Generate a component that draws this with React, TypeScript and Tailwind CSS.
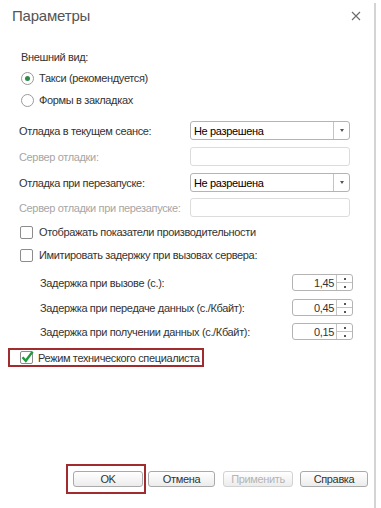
import React from "react";

const FONT = { fontFamily: '"Liberation Sans", Arial, sans-serif' };

function Radio({ checked }: { checked?: boolean }) {
  return (
    <span className="flex h-[13px] w-[13px] shrink-0 items-center justify-center rounded-full border border-[#9a9a9a] bg-white">
      {checked && <span className="h-[5px] w-[5px] rounded-full bg-[#2f8a4a]" />}
    </span>
  );
}

function Checkbox({ checked }: { checked?: boolean }) {
  return (
    <span className="relative block h-[13px] w-[13px] shrink-0 rounded-[2px] border border-[#8c8c8c] bg-white">
      {checked && (
        <svg
          className="absolute -left-[1px] -top-[3px]"
          width="15"
          height="15"
          viewBox="0 0 15 15"
        >
          <path d="M2.5 8.2 L5.8 11.8 L12.6 2.6" fill="none" stroke="#1f9a3c" strokeWidth="2.4" />
        </svg>
      )}
    </span>
  );
}

function Select({ value }: { value: string }) {
  return (
    <div className="flex h-[19px] w-[160px] shrink-0 items-stretch rounded-[3px] border border-[#b4b4b4] bg-white">
      <div className="flex flex-1 items-center pl-[3px] text-black">{value}</div>
      <div className="flex w-[16px] items-center justify-center border-l border-[#c4c4c4]">
        <span className="block h-0 w-0 border-x-[2.5px] border-t-[3px] border-x-transparent border-t-[#555]" />
      </div>
    </div>
  );
}

function EmptyInput() {
  return <div className="h-[19px] w-[160px] shrink-0 rounded-[3px] border border-[#dcdcdc] bg-white" />;
}

function Spin({ value }: { value: string }) {
  return (
    <div className="flex h-[17px] w-[61px] shrink-0 items-stretch rounded-[3px] border border-[#b4b4b4] bg-white">
      <div className="flex flex-1 items-center justify-end pr-[2px] text-[#333]">{value}</div>
      <div className="flex w-[16px] flex-col border-l border-[#c4c4c4]">
        <div className="flex flex-1 items-center justify-center border-b border-[#c4c4c4]">
          <span className="block h-[2px] w-[2px] bg-[#555]" />
        </div>
        <div className="flex flex-1 items-center justify-center">
          <span className="block h-[2px] w-[2px] bg-[#555]" />
        </div>
      </div>
    </div>
  );
}

function Button({ label, disabled, width }: { label: string; disabled?: boolean; width: string }) {
  return (
    <div
      className={`flex h-[16px] items-center justify-center rounded-[3px] border bg-gradient-to-b from-white to-[#ececec] ${width} ${
        disabled ? "border-[#d2d2d2] text-[#b4b4b4]" : "border-[#a9a9a9] text-[#333]"
      }`}
    >
      {label}
    </div>
  );
}

function FieldRow({ label, muted, mt, children }: { label: string; muted?: boolean; mt: string; children: React.ReactNode }) {
  return (
    <div className={`flex items-center ${mt}`}>
      <div className={`w-[190px] shrink-0 pl-[19px] ${muted ? "text-[#a6a6a6]" : "text-[#333]"}`}>{label}</div>
      {children}
    </div>
  );
}

function DelayRow({ label, value, mt }: { label: string; value: string; mt: string }) {
  return (
    <div className={`flex items-center ${mt}`}>
      <div className="w-[292px] shrink-0 pl-[40px] text-[#333]">{label}</div>
      <Spin value={value} />
    </div>
  );
}

export default function App() {
  return (
    <div
      className="flex h-[508px] w-[381px] whitespace-nowrap bg-white text-[11px] leading-[14px] tracking-[-0.35px]"
      style={FONT}
    >
      <main className="flex w-[374px] flex-col">
        <header className="flex h-[27px] items-center justify-between pl-[12px] pr-[13px] pt-[4px]">
          <h1 className="text-[15px] leading-[20px] tracking-[-0.2px] text-[#555]">Параметры</h1>
          <svg width="10" height="10" viewBox="0 0 10 10">
            <path d="M1 1 L9 9 M9 1 L1 9" stroke="#6b6b6b" strokeWidth="1.1" />
          </svg>
        </header>

        <div className="mt-[20px] flex h-[20px] items-center pl-[21px] text-[#333]">Внешний вид:</div>
        <label className="flex h-[22px] items-center gap-[5px] pl-[21px] text-[#333]">
          <Radio checked />
          Такси (рекомендуется)
        </label>
        <label className="flex h-[22px] items-center gap-[5px] pl-[21px] text-[#333]">
          <Radio />
          Формы в закладках
        </label>

        <FieldRow label="Отладка в текущем сеансе:" mt="mt-[10px]">
          <Select value="Не разрешена" />
        </FieldRow>
        <FieldRow label="Сервер отладки:" muted mt="mt-[7px]">
          <EmptyInput />
        </FieldRow>
        <FieldRow label="Отладка при перезапуске:" mt="mt-[7px]">
          <Select value="Не разрешена" />
        </FieldRow>
        <FieldRow label="Сервер отладки при перезапуске:" muted mt="mt-[6px]">
          <EmptyInput />
        </FieldRow>

        <label className="mt-[5px] flex h-[20px] items-center gap-[6px] pl-[20px] text-[#333]">
          <Checkbox />
          Отображать показатели производительности
        </label>
        <label className="mt-[3px] flex h-[20px] items-center gap-[6px] pl-[20px] text-[#333]">
          <Checkbox />
          Имитировать задержку при вызовах сервера:
        </label>

        <DelayRow label="Задержка при вызове (с.):" value="1,45" mt="mt-[9px]" />
        <DelayRow label="Задержка при передаче данных (с./Кбайт):" value="0,45" mt="mt-[8px]" />
        <DelayRow label="Задержка при получении данных (с./Кбайт):" value="0,15" mt="mt-[7px]" />

        <div className="ml-[8px] mt-[8px] flex h-[19px] w-[196px] items-center gap-[5px] border-2 border-[#a12c2f] pl-[10px] text-[#333]">
          <Checkbox checked />
          Режим технического специалиста
        </div>

        <footer className="mt-[97px] flex items-center">
          <div className="ml-[66px] flex h-[30px] w-[80px] items-center border-2 border-[#a12c2f] pl-[5px]">
            <Button label="OK" width="w-[70px]" />
          </div>
          <div className="ml-[2px]">
            <Button label="Отмена" width="w-[67px]" />
          </div>
          <div className="ml-[8px]">
            <Button label="Применить" disabled width="w-[70px]" />
          </div>
          <div className="ml-[7px]">
            <Button label="Справка" width="w-[68px]" />
          </div>
        </footer>
      </main>
      <div className="mt-[3px] w-[2px] bg-[#d4d4d4]" />
    </div>
  );
}
